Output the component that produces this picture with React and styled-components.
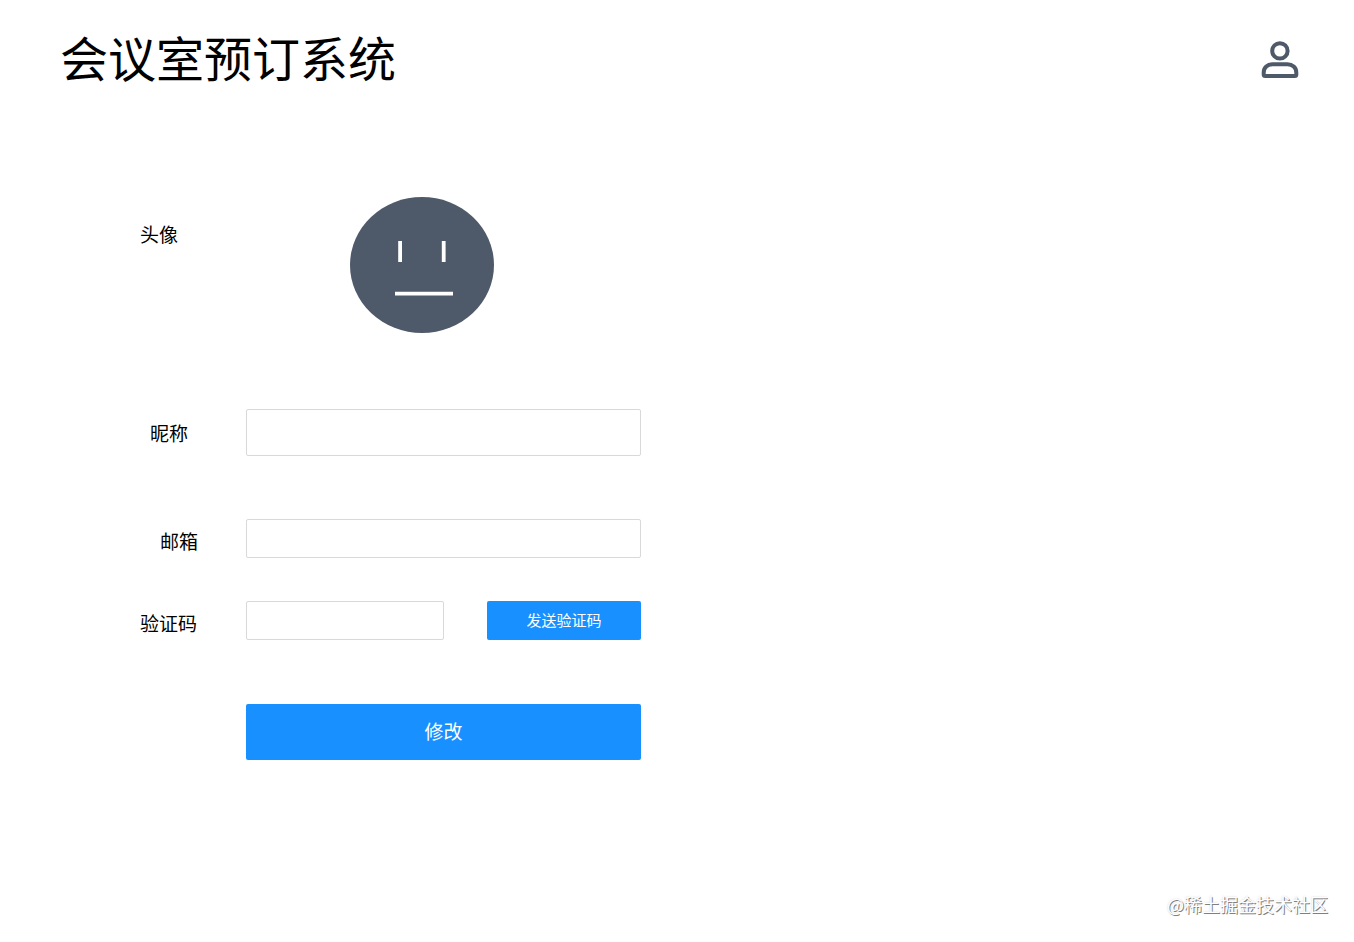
import React from 'react';
import styled, { createGlobalStyle } from 'styled-components';

const GlobalStyle = createGlobalStyle`
  * { box-sizing: border-box; }
  body {
    margin: 0;
    background: #fff;
    color: #000;
    font-family: "Noto Sans CJK SC", sans-serif;
  }
  button, input { font-family: inherit; }
`;

const Page = styled.div`
  display: flex;
  flex-direction: column;
  min-height: 100vh;
`;

const Header = styled.header`
  display: flex;
  align-items: center;
  justify-content: space-between;
  padding: 24px 55px 24px 60px;
`;

const Title = styled.h1`
  margin: 0;
  padding-bottom: 8px;
  font-size: 48px;
  font-weight: 400;
  line-height: 64px;
`;

const ProfileButton = styled.button`
  display: flex;
  padding: 0;
  border: 0;
  background: none;
  color: #4e5969;
  cursor: pointer;
`;

const Form = styled.form`
  display: flex;
  flex-direction: column;
  width: 100%;
  max-width: 641px;
  padding: 77px 0 0 140px;
`;

const Row = styled.div`
  display: grid;
  grid-template-columns: 106px 1fr;
  align-items: ${({ $top }) => ($top ? 'start' : 'center')};
  margin-top: ${({ $gap }) => $gap}px;
`;

const Label = styled.label`
  padding-top: ${({ $drop = 0 }) => $drop}px;
  padding-left: ${({ $indent = 0 }) => $indent}px;
  font-size: 19px;
  line-height: 28px;
`;

const AvatarSlot = styled.div`
  display: flex;
  padding-left: 104px;
`;

const Input = styled.input`
  width: 100%;
  min-width: 0;
  height: ${({ $tall }) => ($tall ? 47 : 39)}px;
  padding: 0 12px;
  border: 1px solid #d9d9d9;
  border-radius: 2px;
  background: #fff;
  font-size: 19px;
  outline: none;
`;

const CodeFields = styled.div`
  display: grid;
  grid-template-columns: 198px 154px;
  justify-content: space-between;
`;

const Button = styled.button`
  height: ${({ $large }) => ($large ? 56 : 39)}px;
  padding: 0 0 2px;
  border: 0;
  border-radius: 2px;
  background: #1890ff;
  color: #fff;
  font-size: ${({ $large }) => ($large ? 19 : 15)}px;
  line-height: 28px;
  cursor: pointer;
`;

const SubmitButton = styled(Button)`
  grid-column: 2;
`;

const Footer = styled.footer`
  margin-top: auto;
  padding: 0 26px 26px;
  color: #fff;
  font-size: 18px;
  line-height: 24px;
  text-align: right;
  text-shadow: 1px 1px 0 #808080, 0 0 2px #d0d0d0;
`;

function UserIcon() {
  return (
    <svg width="38" height="38" viewBox="0 0 38 38" fill="none" stroke="currentColor" strokeWidth="4" aria-hidden="true">
      <circle cx="18.9" cy="9.9" r="7.7" />
      <path d="M2.7 33.6V31.6C2.7 26.6 6.6 23.3 11.6 23.3H26.4C31.4 23.3 35.3 26.6 35.3 31.6V33.6Q35.3 35.1 33.8 35.1H4.2Q2.7 35.1 2.7 33.6Z" strokeLinejoin="round" />
    </svg>
  );
}

function Avatar() {
  return (
    <svg width="144" height="136" viewBox="0 0 144 136" role="img" aria-labelledby="avatar-label">
      <ellipse cx="72" cy="68" rx="72" ry="68" fill="#4e5969" />
      <path d="M50.1 44V65M93.7 44V65M45 96.7H103" stroke="#fff" strokeWidth="3.8" />
    </svg>
  );
}

export default function App() {
  return (
    <Page>
      <GlobalStyle />
      <Header>
        <Title>会议室预订系统</Title>
        <ProfileButton type="button" aria-label="个人中心">
          <UserIcon />
        </ProfileButton>
      </Header>
      <Form onSubmit={(e) => e.preventDefault()}>
        <Row $top $gap={0}>
          <Label as="span" id="avatar-label" $drop={23}>头像</Label>
          <AvatarSlot>
            <Avatar />
          </AvatarSlot>
        </Row>
        <Row $gap={76}>
          <Label htmlFor="nickname" $indent={10}>昵称</Label>
          <Input id="nickname" $tall />
        </Row>
        <Row $gap={63}>
          <Label htmlFor="email" $indent={20} $drop={4}>邮箱</Label>
          <Input id="email" type="email" />
        </Row>
        <Row $gap={43}>
          <Label htmlFor="captcha" $drop={4}>验证码</Label>
          <CodeFields>
            <Input id="captcha" />
            <Button type="button">发送验证码</Button>
          </CodeFields>
        </Row>
        <Row $gap={64}>
          <SubmitButton type="submit" $large>修改</SubmitButton>
        </Row>
      </Form>
      <Footer>@稀土掘金技术社区</Footer>
    </Page>
  );
}
